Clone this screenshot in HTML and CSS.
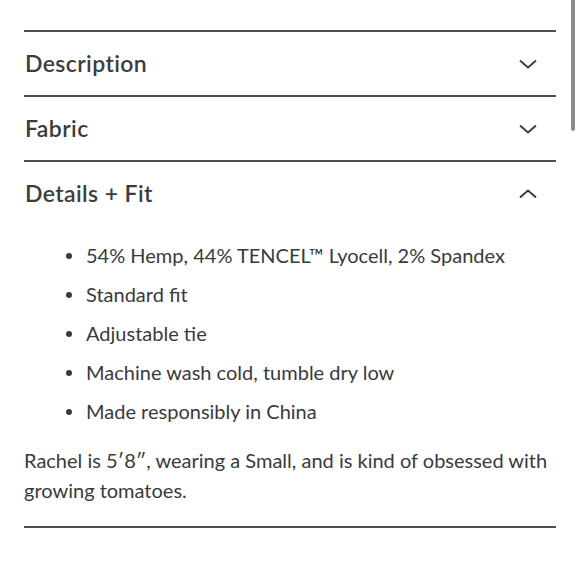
FILE: index.html
```html
<!DOCTYPE html>
<html>
<head>
<meta charset="utf-8">
<link rel="stylesheet" href="styles.css">
</head>
<body>
<div class="page">
  <section class="acc">
    <div class="acc-head">
      <span class="acc-title">Description</span>
      <svg class="chev" width="18" height="10" viewBox="0 0 18 10"><path d="M1 1.5 L9 8.5 L17 1.5" fill="none" stroke="#3d3d40" stroke-width="2"/></svg>
    </div>
  </section>
  <section class="acc">
    <div class="acc-head">
      <span class="acc-title">Fabric</span>
      <svg class="chev" width="18" height="10" viewBox="0 0 18 10"><path d="M1 1.5 L9 8.5 L17 1.5" fill="none" stroke="#3d3d40" stroke-width="2"/></svg>
    </div>
  </section>
  <section class="acc acc-open">
    <div class="acc-head">
      <span class="acc-title">Details + Fit</span>
      <svg class="chev" width="18" height="10" viewBox="0 0 18 10"><path d="M1 8.5 L9 1.5 L17 8.5" fill="none" stroke="#3d3d40" stroke-width="2"/></svg>
    </div>
    <ul class="facts">
      <li>54% Hemp, 44% TENCEL™ Lyocell, 2% Spandex</li>
      <li>Standard fit</li>
      <li>Adjustable tie</li>
      <li>Machine wash cold, tumble dry low</li>
      <li>Made responsibly in China</li>
    </ul>
    <p class="note">Rachel is 5′8″, wearing a Small, and is kind of obsessed with growing tomatoes.</p>
  </section>
  <div class="end-rule"></div>
</div>
<div class="scrollbar"></div>
</body>
</html>
```
FILE: styles.css
```css
html, body {
  margin: 0;
  padding: 0;
  background: #ffffff;
}
body {
  font-family: "Lato", "Liberation Sans", sans-serif;
  color: #3a3a3d;
}
.page {
  padding: 30px 24px 0 24px;
  width: 532px;
}
.acc {
  border-top: 2px solid #4e4e52;
}
.acc-head {
  height: 63px;
  display: flex;
  align-items: center;
  justify-content: space-between;
  padding: 0 19px 0 1px;
}
.acc-title {
  font-size: 23px;
  font-weight: 600;
  letter-spacing: 0.4px;
  color: #3c3c3f;
  padding-bottom: 2px;
}
.chev {
  display: block;
}
.facts {
  margin: 11px 0 0 0;
  padding: 0 0 0 62px;
  list-style: none;
}
.facts li {
  position: relative;
  font-size: 20px;
  line-height: 39px;
}
.facts li::before {
  content: "";
  position: absolute;
  left: -20px;
  top: 17px;
  width: 6px;
  height: 6px;
  border-radius: 50%;
  background: #3a3a3d;
}
.note {
  margin: 15px 0 0 0;
  font-size: 20px;
  line-height: 29.5px;
  padding-bottom: 21px;
}
.end-rule {
  border-top: 2px solid #4e4e52;
}
.scrollbar {
  position: absolute;
  top: 0;
  left: 571px;
  width: 4px;
  height: 131px;
  border-radius: 0 0 2px 2px;
  background: #8c8c8c;
}
```
